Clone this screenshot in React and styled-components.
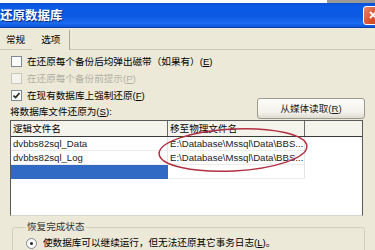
import React from 'react'
import styled, { createGlobalStyle } from 'styled-components'

const GlobalStyle = createGlobalStyle`
  html, body {
    margin: 0;
    padding: 0;
    background: #ece9d8;
  }
`

const uiFont = `'Liberation Sans', 'Noto Sans CJK SC', sans-serif`

const Window = styled.div`
  width: 375px;
  height: 250px;
  overflow: hidden;
  background: #ece9d8;
  font-family: ${uiFont};
  font-size: 9.6px;
  line-height: 12px;
  color: #000;
`

// accelerator key like (E), kept in a latin font so the parens stay narrow
const Key = styled.span`
  font-family: 'Liberation Sans', sans-serif;
  font-size: 9.6px;

  u { text-decoration: underline; }
`

const TopStrip = styled.div`
  height: 3px;
  background: #fdfdfd;
  display: flex;
  justify-content: flex-end;

  .edge {
    width: 48px;
    background: #9a9a96;
  }
`

const TitleBar = styled.div`
  height: 24px;
  display: flex;
  align-items: center;
  justify-content: space-between;
  overflow: hidden;
  background: linear-gradient(#0a4fd8 0%, #0b5be6 15%, #0d5ae2 55%, #1a6af0 85%, #0f55d6 100%);
  border-bottom: 1px solid #0a3fb0;
`

const Title = styled.div`
  color: #fff;
  font-family: 'Noto Sans CJK SC', sans-serif;
  font-weight: 700;
  font-size: 12.5px;
  line-height: 16px;
  text-shadow: 1px 1px 0 #0a2a80;
`

const CloseButton = styled.div`
  width: 20px;
  height: 19px;
  margin-right: -8px;
  border: 1px solid #fff;
  border-radius: 3px;
  background: linear-gradient(135deg, #e8866a, #d8542e 55%, #c23d1c);
  display: flex;
  align-items: center;
  justify-content: center;
  box-sizing: border-box;
`

const TabRow = styled.div`
  height: 21px;
  display: flex;
  align-items: flex-end;
  padding-left: 1px;
  border-bottom: 1px solid #c8c6b8;
`

const Tab = styled.div`
  height: ${p => (p.$active ? '20px' : '18px')};
  padding: 0 ${p => (p.$active ? '9px' : '5px')};
  margin-right: 2px;
  margin-bottom: ${p => (p.$active ? '-1px' : '0')};
  display: flex;
  align-items: center;
  background: #ece9d8;
  border-right: ${p => (p.$active ? '1px solid #a8a698' : 'none')};
`

const Panel = styled.div`
  padding: 0 10px;
`

const TopArea = styled.div`
  display: flex;
  justify-content: space-between;
  align-items: flex-end;
  padding-top: 3px;
`

const Options = styled.div`
  display: flex;
  flex-direction: column;
`

const CheckRow = styled.div`
  height: 17px;
  display: flex;
  align-items: center;
  gap: 5px;
  padding-left: 1px;
  color: ${p => (p.$disabled ? '#b2b0a4' : '#000')};
`

const Box = styled.span`
  width: 9px;
  height: 9px;
  flex: none;
  border: 1px solid ${p => (p.$disabled ? '#cac8bb' : '#7f8a96')};
  background: ${p => (p.$disabled ? '#f4f3ee' : '#fbfbf8')};
  display: flex;
  align-items: center;
  justify-content: center;
`

const Label = styled.div`
  height: 16px;
  display: flex;
  align-items: center;
`

const Button = styled.div`
  width: 108px;
  height: 21px;
  margin-bottom: 1px;
  box-sizing: border-box;
  border: 1px solid #9a9a90;
  border-radius: 3px;
  background: linear-gradient(#fdfdfb, #f2f1ea 70%, #dedbcf);
  display: flex;
  align-items: center;
  justify-content: center;
  color: #222;
`

const List = styled.div`
  position: relative;
  height: 96px;
  width: 353px;
  box-sizing: border-box;
  background: #fff;
  border: 1px solid #5a5a5a;
  border-bottom-color: #d8d6c8;
`

const HeaderRow = styled.div`
  display: grid;
  grid-template-columns: 157px 137px 1fr;
  height: 15px;
  background: #f4f3ec;
  border-bottom: 1px solid #3a3a3a;
`

const HeaderCell = styled.div`
  display: flex;
  align-items: center;
  padding-left: 2px;
  border-right: 1px solid ${p => (p.$last ? 'transparent' : '#6a6a6a')};
`

const Row = styled.div`
  display: grid;
  grid-template-columns: 157px 137px 1fr;
  height: 14px;
`

const Cell = styled.div`
  display: flex;
  align-items: center;
  padding-left: 2px;
  overflow: hidden;
  white-space: nowrap;
  font-size: 9.6px;
  color: #222;
  background: ${p => (p.$selected ? '#316ac5' : 'transparent')};
  border-right: 1px solid ${p => (p.$grid ? '#e4e4e4' : 'transparent')};
  border-bottom: 1px solid ${p => (p.$grid ? '#ececec' : 'transparent')};
`

const Annotation = styled.svg`
  position: absolute;
  left: 0;
  top: 0;
  pointer-events: none;
`

const GroupBox = styled.fieldset`
  margin: 5px 0 0 2px;
  width: 353px;
  box-sizing: border-box;
  border: 1px solid #d0d0bf;
  border-radius: 3px;
  padding: 4px 0 10px 13px;

  legend {
    padding: 0 1px;
    margin-left: 0;
    color: #333;
  }
`

const RadioRow = styled.div`
  display: flex;
  align-items: center;
  gap: 6px;
  white-space: nowrap;
`

const Radio = styled.span`
  width: 9px;
  height: 9px;
  flex: none;
  border-radius: 50%;
  border: 1px solid #7f8a96;
  background: #fafaf6;
  display: flex;
  align-items: center;
  justify-content: center;

  &::after {
    content: '';
    width: 3px;
    height: 3px;
    border-radius: 50%;
    background: #2a2a2a;
  }
`

function Check() {
  return (
    <svg width="7" height="7" viewBox="0 0 7 7">
      <path d="M0.5 3.5 L2.6 5.6 L6.5 1" stroke="#1e2a20" strokeWidth="1.6" fill="none" />
    </svg>
  )
}

function Accel({ k }) {
  return <Key>(<u>{k}</u>)</Key>
}

export default function App() {
  return (
    <Window>
      <GlobalStyle />
      <TopStrip><div className="edge" /></TopStrip>
      <TitleBar>
        <Title>还原数据库</Title>
        <CloseButton>
          <svg width="10" height="10" viewBox="0 0 10 10">
            <path d="M2 2 L8 8 M8 2 L2 8" stroke="#fff" strokeWidth="1.8" />
          </svg>
        </CloseButton>
      </TitleBar>
      <TabRow>
        <Tab>常规</Tab>
        <Tab $active>选项</Tab>
      </TabRow>
      <Panel>
        <TopArea>
          <Options>
            <CheckRow><Box /><span>在还原每个备份后均弹出磁带（如果有）<Accel k="E" /></span></CheckRow>
            <CheckRow $disabled><Box $disabled /><span>在还原每个备份前提示<Accel k="P" /></span></CheckRow>
            <CheckRow><Box><Check /></Box><span>在现有数据库上强制还原<Accel k="F" /></span></CheckRow>
            <Label><span>将数据库文件还原为<Accel k="S" /><Key>:</Key></span></Label>
          </Options>
          <Button><span>从媒体读取<Accel k="R" /></span></Button>
        </TopArea>
        <List>
          <HeaderRow>
            <HeaderCell>逻辑文件名</HeaderCell>
            <HeaderCell>移至物理文件名</HeaderCell>
            <HeaderCell $last />
          </HeaderRow>
          <Row>
            <Cell $grid>dvbbs82sql_Data</Cell>
            <Cell $grid>E:\Database\Mssql\Data\BBS...</Cell>
            <Cell />
          </Row>
          <Row>
            <Cell $grid>dvbbs82sql_Log</Cell>
            <Cell $grid>E:\Database\Mssql\Data\BBS...</Cell>
            <Cell />
          </Row>
          <Row>
            <Cell $selected />
            <Cell $grid />
            <Cell />
          </Row>
          <Annotation width="353" height="96">
            <ellipse cx="222" cy="29" rx="74" ry="21" transform="rotate(-3 222 29)"
              fill="none" stroke="#b23040" strokeWidth="1.5" />
          </Annotation>
        </List>
        <GroupBox>
          <legend>恢复完成状态</legend>
          <RadioRow><Radio /><span>使数据库可以继续运行，但无法还原其它事务日志<Accel k="L" />。</span></RadioRow>
        </GroupBox>
      </Panel>
    </Window>
  )
}
